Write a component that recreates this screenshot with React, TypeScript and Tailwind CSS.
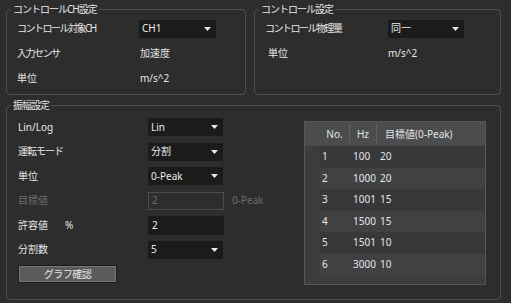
import React from "react";

function Arrow() {
  return (
    <svg width="7" height="4" viewBox="0 0 7 4" className="shrink-0">
      <path d="M0 0 H7 L3.5 4 Z" fill="#e8e8e8" />
    </svg>
  );
}

function Select({ value, w = "w-[77px]" }: { value: string; w?: string }) {
  return (
    <div className={`${w} h-[18px] bg-[#1b1b1b] flex items-center justify-between pl-[3px] pr-[5px] text-[#ececec]`}>
      <span>{value}</span>
      <Arrow />
    </div>
  );
}

function Group({ title, className, children }: { title: string; className?: string; children: React.ReactNode }) {
  return (
    <fieldset className={`border border-[#4f4f4f] rounded-[4px] ${className ?? ""}`}>
      <legend className="ml-[4px] px-[2px] leading-[13px] text-[#e6e6e6] tracking-[-1px]">{title}</legend>
      {children}
    </fieldset>
  );
}

const rows = [
  ["1", "100", "20"],
  ["2", "1000", "20"],
  ["3", "1001", "15"],
  ["4", "1500", "15"],
  ["5", "1501", "10"],
  ["6", "3000", "10"],
];

export default function App() {
  return (
    <div className="w-[511px] h-[303px] bg-[#2d2d2d] font-['Noto_Sans','Noto_Sans_CJK_JP',sans-serif] text-[10px] text-[#e6e6e6] pl-[6px] pr-[10px] pt-[3px] overflow-hidden">
      {/* 上段 */}
      <div className="flex gap-[8px]">
        <Group title="コントロールCH設定" className="w-[240px]">
          <div className="pl-[10px] pb-[3px]">
            <div className="h-[25px] flex items-center">
              <span className="w-[122px] tracking-[-1.5px]">コントロール対象CH</span>
              <Select value="CH1" />
            </div>
            <div className="h-[25px] flex items-center">
              <span className="w-[123px] tracking-[-1.5px]">入力センサ</span>
              <span>加速度</span>
            </div>
            <div className="h-[25px] flex items-center">
              <span className="w-[123px]">単位</span>
              <span>m/s^2</span>
            </div>
          </div>
        </Group>
        <Group title="コントロール設定" className="flex-1">
          <div className="pl-[10px] pb-[3px]">
            <div className="h-[25px] flex items-center">
              <span className="w-[123px] tracking-[-1.5px]">コントロール物理量</span>
              <Select value="同一" w="w-[76px]" />
            </div>
            <div className="h-[25px] flex items-center">
              <span className="w-[123px] pl-[3px]">単位</span>
              <span>m/s^2</span>
            </div>
            <div className="h-[25px]" />
          </div>
        </Group>
      </div>

      {/* 振幅設定 */}
      <Group title="振幅設定" className="mt-[4px]">
        <div className="flex pl-[11px] pr-[14px] pb-[14px]">
          <div className="mt-[3px]">
            <div className="h-[24.5px] flex items-center">
              <span className="w-[130px]">Lin/Log</span>
              <Select value="Lin" w="w-[75px]" />
            </div>
            <div className="h-[24.5px] flex items-center">
              <span className="w-[130px] tracking-[-1px]">運転モード</span>
              <Select value="分割" w="w-[75px]" />
            </div>
            <div className="h-[24.5px] flex items-center">
              <span className="w-[130px]">単位</span>
              <Select value="0-Peak" w="w-[75px]" />
            </div>
            <div className="h-[24.5px] flex items-center text-[#6c6c6c]">
              <span className="w-[130px]">目標値</span>
              <div className="w-[76px] h-[18px] border border-[#4c4c4c] flex items-center pl-[3px]">2</div>
              <span className="ml-[8px]">0-Peak</span>
            </div>
            <div className="h-[24.5px] flex items-center">
              <span className="w-[47px]">許容値</span>
              <span className="w-[83px]">%</span>
              <div className="w-[76px] h-[19px] bg-[#1b1b1b] flex items-center pl-[4px] text-[#ececec]">2</div>
            </div>
            <div className="h-[24.5px] flex items-center">
              <span className="w-[130px]">分割数</span>
              <Select value="5" w="w-[75px]" />
            </div>
            <button className="mt-[3px] w-[99px] h-[18px] bg-[#5b5b5b] border border-[#1c1c1c] shadow-[inset_0_0_0_1px_#777] text-[#e8e8e8] tracking-[-0.5px] flex items-center justify-center">
              グラフ確認
            </button>
          </div>

          {/* テーブル */}
          <div className="ml-auto mt-[9px] w-[182px] h-[164px] border border-[#575757] bg-[#3b3d3f] self-start overflow-hidden">
            <div className="grid grid-cols-[15px_30px_27px_1fr] h-[24px] bg-[#4a4c4e] text-[#e4e4e4]">
              <div />
              <div className="my-[3px] border-r border-[#626466] flex items-center justify-center">No.</div>
              <div className="my-[3px] border-r border-[#626466] flex items-center justify-center">Hz</div>
              <div className="flex items-center pl-[8px]">目標値(0-Peak)</div>
            </div>
            {rows.map((r, i) => (
              <div key={r[0]} className="grid grid-cols-[15px_30px_27px_1fr] h-[21.5px]">
                <div className="bg-[#3a3c3e]" />
                <div className={`flex items-center pl-[2px] ${i % 2 === 0 ? "bg-[#37383a]" : "bg-[#3f4143]"}`}>{r[0]}</div>
                <div className={`flex items-center pl-[3px] ${i % 2 === 0 ? "bg-[#37383a]" : "bg-[#3f4143]"}`}>{r[1]}</div>
                <div className={`flex items-center pl-[3px] ${i % 2 === 0 ? "bg-[#37383a]" : "bg-[#3f4143]"}`}>{r[2]}</div>
              </div>
            ))}
          </div>
        </div>
      </Group>
    </div>
  );
}
